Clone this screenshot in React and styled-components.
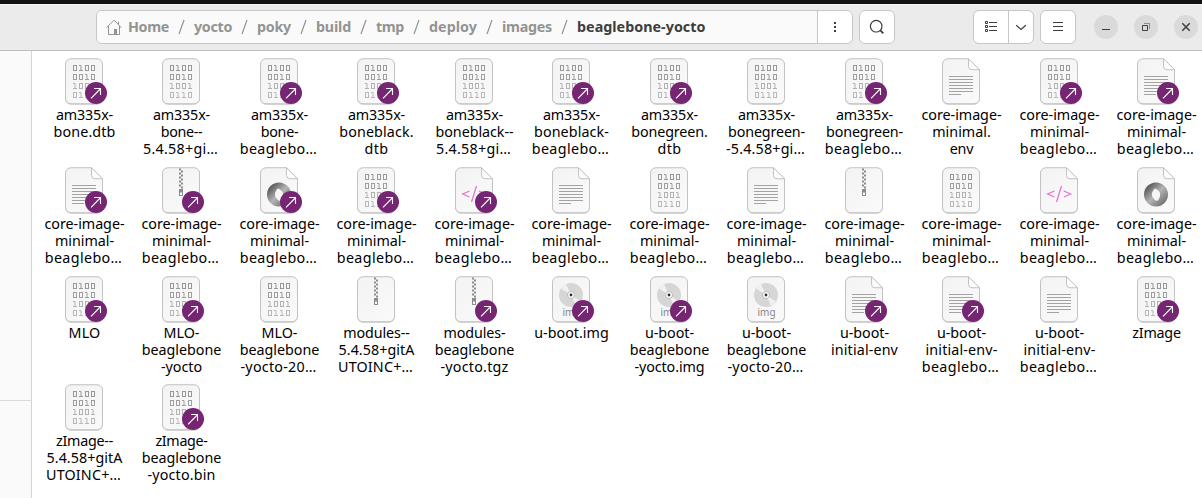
import React, { useLayoutEffect, useRef, useState } from "react";
import styled, { createGlobalStyle } from "styled-components";

const Global = createGlobalStyle`
  *, *::before, *::after { box-sizing: border-box; }
  body { margin: 0; background: #fff; overflow: hidden; font-family: "Noto Sans", "Open Sans", sans-serif; }
`;

const Window = styled.div`
  display: flex;
  flex-direction: column;
  width: 1202px;
  height: 498px;
  overflow: hidden;
  background: #fff;
`;
const TopPanel = styled.div`
  flex: 0 0 4px;
  background: #121212;
`;
const HeaderBar = styled.header`
  flex: 0 0 47px;
  display: flex;
  align-items: flex-start;
  padding: 5px 0 0 96px;
  background: #ebebeb;
  border-top: 1px solid #f8f8f8;
  border-bottom: 1px solid #bfbfbf;
`;
const Group = styled.div`
  display: flex;
  flex: none;
  height: 34px;
  width: ${(p) => p.$w}px;
  margin-right: ${(p) => p.$gap || 0}px;
  border: 1px solid #c6c6c6;
  border-radius: 6px;
  background: #fff;
  overflow: hidden;
`;
const Segment = styled.button`
  display: flex;
  align-items: center;
  justify-content: center;
  flex: ${(p) => (p.$w ? `0 0 ${p.$w}px` : 1)};
  padding: 0;
  border: 0;
  border-left: ${(p) => (p.$divided ? "1px solid #c6c6c6" : "0")};
  background: transparent;
`;
const PathBar = styled.nav`
  flex: 1;
  display: flex;
  align-items: center;
  padding-left: 9px;
  background: #fafafa;
`;
const Crumb = styled.span`
  flex: 0 0 ${(p) => p.$w}px;
  font-size: 14.3px;
  line-height: 20px;
  font-weight: 700;
  white-space: nowrap;
  color: ${(p) => (p.$current ? "#3d3d3d" : "#929492")};
`;
const Slash = styled.span`
  flex: 0 0 25px;
  display: flex;
  justify-content: center;
`;
const HomeIcon = styled.svg`
  flex: none;
  margin-right: 6px;
`;
const WindowButton = styled.button`
  display: flex;
  flex: none;
  align-items: center;
  justify-content: center;
  width: 24px;
  height: 24px;
  margin: 5px 16px 0 0;
  padding: 0;
  border: 0;
  border-radius: 50%;
  background: #dadada;
`;
const Body = styled.div`
  flex: 1;
  display: flex;
  min-height: 0;
`;
const Sidebar = styled.aside`
  flex: 0 0 32px;
  border-right: 1px solid #d5d5d5;
  background: #fafafa;
`;
const Places = styled.div`
  height: 350px;
  border-bottom: 1px solid #dadada;
`;
const Files = styled.main`
  flex: none;
  display: grid;
  grid-template-columns: repeat(6, 97px 98px);
  grid-template-rows: 109px 109px 108px 108px;
  padding: 6px 0 0 4px;
`;
const File = styled.div`
  display: flex;
  flex-direction: column;
  align-items: center;
  width: 97px;
`;
const Thumb = styled.svg`
  display: block;
  flex: none;
  margin-left: 6px;
`;
const Label = styled.div`
  display: flex;
  flex-direction: column;
  align-items: center;
`;
const LabelLine = styled.span`
  display: block;
  padding-right: ${(p) => (p.$cut ? 2 : 0)}px;
  font-size: 14.3px;
  line-height: 17px;
  height: 17px;
  white-space: pre;
  color: #000;
`;

function FitText({ as: Tag, width, children, ...rest }) {
  const ref = useRef(null);
  const [spacing, setSpacing] = useState(0);
  useLayoutEffect(() => {
    const range = document.createRange();
    range.selectNodeContents(ref.current);
    const natural = range.getBoundingClientRect().width;
    setSpacing((width - natural) / children.length);
  }, [width, children]);
  return (
    <Tag ref={ref} style={{ letterSpacing: `${spacing}px` }} {...rest}>
      {children}
    </Tag>
  );
}

const LINE_WIDTHS = {
  "am335x-": 57, "bone.dtb": 62, "bone--": 41.5, "5.4.58+gi…": 75, "bone-": 37.5,
  "core-image-": 80, "minimal-": 59, "beaglebo…": 77.5, "beaglebone": 79.5,
  "-yocto.tgz": 68, "modules-": 62, "u-boot.img": 74.5, "bonegreen-": 77,
  "-5.4.58+gi…": 79, "bonegreen.": 76.5, "dtb": 24, "minimal.": 58.5, "env": 23.5,
  "MLO": 32, "MLO-": 36, "-yocto-20…": 76, "modules--": 66.5, "5.4.58+gitA": 76,
  "UTOINC+…": 75, "zImage--": 57, "zImage-": 52, "zImage": 48.5, "-yocto.bin": 68,
  "boneblack.": 74.5, "boneblack--": 78, "boneblack-": 75, "u-boot-": 49,
  "initial-env": 67, "initial-env-": 72, "-yocto": 41, "-yocto.img": 70,
};

const DIGITS = ["0100", "0010", "1001", "0110"];
const PAGE_PLAIN = "M6 .75h26a5.5 5.5 0 0 1 5.5 5.5v34a5.5 5.5 0 0 1-5.5 5.5h-26a5.5 5.5 0 0 1-5.5-5.5v-34a5.5 5.5 0 0 1 5.5-5.5z";
const PAGE_FOLDED = "M6 .75h20.5l11 11v28.5a5.5 5.5 0 0 1-5.5 5.5h-26a5.5 5.5 0 0 1-5.5-5.5v-34a5.5 5.5 0 0 1 5.5-5.5z";

function Binary() {
  return DIGITS.map((row, r) => (
    <g key={r} stroke={["#989898", "#9e9e9e", "#b2b2b2", "#b8b8b8"][r]} fill="none">
      {[...row].map((d, c) => {
        const x = 8.5 + c * 6, y = 7.5 + r * 9;
        return d === "0"
          ? <rect key={c} x={x} y={y} width="3" height="5" />
          : <path key={c} d={`M${x - 0.5} ${y}h2v5M${x - 0.5} ${y + 5}h4`} />;
      })}
    </g>
  ));
}
function TextLines() {
  return (
    <g fill="#a3a3a3">
      {[18, 21, 24, 27, 30, 33, 36].map((y, i) => (
        <rect key={y} x="7" y={y} width={i === 6 ? 12 : 24} height="1" />
      ))}
    </g>
  );
}
function Zip() {
  return (
    <g fill="#8c8c8c">
      {[...Array(10)].map((_, i) => (
        <rect key={i} x={i % 2 ? 19 : 17} y={1.5 + i * 2} width="2" height="2" />
      ))}
      <path d="M17 22h4v7h-4zM18 25.5v2.5h2v-2.5z" fillRule="evenodd" />
    </g>
  );
}
function Code() {
  return <path d="M14.5 24L7.7 27l6.8 3M23.8 24l6.8 3-6.8 3M21.5 19l-5 16" fill="none" stroke="#e077d6" strokeWidth="1.3" />;
}
function Ring() {
  return (
    <g>
      <circle cx="19" cy="27.5" r="8" fill="none" stroke="url(#ring)" strokeWidth="8" />
      <path d="M18 21.500c5 1 7 9 2 12.500-5-1-6.500-9.500-2-12.500z" fill="#f6f6f6" />
    </g>
  );
}
function Disc() {
  return (
    <g>
      <circle cx="19" cy="19" r="12" fill="#d6d6d6" />
      <path d="M19 19L9 12.400A12 12 0 0 1 14 8.100zM19 19l10 6.600a12 12 0 0 1-5 4.300z" fill="#f0f0f0" />
      <circle cx="19" cy="19" r="3.5" fill="#fff" stroke="#bcbab0" />
      <circle cx="19" cy="19" r="1.4" fill="#2e2e2e" />
      <text x="19.500" y="40" textAnchor="middle" fontSize="10" fill="#858585">img</text>
    </g>
  );
}
const GLYPHS = { bin: Binary, txt: TextLines, zip: Zip, code: Code, json: Ring, img: Disc };

function FileIcon({ kind, link }) {
  const Glyph = GLYPHS[kind];
  const folded = kind === "txt" || kind === "code" || kind === "json";
  return (
    <Thumb width="45" height="49" viewBox="0 -1 45 49">
      <path d={folded ? PAGE_FOLDED : PAGE_PLAIN} transform="translate(0 .6)" fill="#d0d0d0" stroke="#d5d5d5" />
      <path d={folded ? PAGE_FOLDED : PAGE_PLAIN} fill="url(#paper)" stroke="#c2c2c2" />
      {folded && <path d="M26.500 .75v7.500a3.500 3.500 0 0 0 3.500 3.500h7.500z" fill="#fdfdfd" stroke="#c2c2c2" />}
      <Glyph />
      {link && (
        <g>
          <circle cx="31" cy="35" r="11" fill="#762572" />
          <path d="M26 40.300l9.700-9.800M29 30.500h6.500v6.500" fill="none" stroke="#fff" strokeWidth="1.100" />
        </g>
      )}
    </Thumb>
  );
}

const CIM = ["core-image-", "minimal-", "beaglebo…"];
const FILES = [
  ["bin", 1, ["am335x-", "bone.dtb"]],
  ["bin", 0, ["am335x-", "bone--", "5.4.58+gi…"]],
  ["bin", 1, ["am335x-", "bone-", "beaglebo…"]],
  ["bin", 1, ["am335x-", "boneblack.", "dtb"]],
  ["bin", 0, ["am335x-", "boneblack--", "5.4.58+gi…"]],
  ["bin", 1, ["am335x-", "boneblack-", "beaglebo…"]],
  ["bin", 1, ["am335x-", "bonegreen.", "dtb"]],
  ["bin", 0, ["am335x-", "bonegreen-", "-5.4.58+gi…"]],
  ["bin", 1, ["am335x-", "bonegreen-", "beaglebo…"]],
  ["txt", 0, ["core-image-", "minimal.", "env"]],
  ["bin", 1, CIM],
  ["txt", 1, CIM],
  ["txt", 1, CIM],
  ["zip", 1, CIM],
  ["json", 1, CIM],
  ["bin", 1, CIM],
  ["code", 1, CIM],
  ["txt", 0, CIM],
  ["bin", 0, CIM],
  ["txt", 0, CIM],
  ["zip", 0, CIM],
  ["bin", 0, CIM],
  ["code", 0, CIM],
  ["json", 0, CIM],
  ["bin", 1, ["MLO"]],
  ["bin", 1, ["MLO-", "beaglebone", "-yocto"]],
  ["bin", 0, ["MLO-", "beaglebone", "-yocto-20…"]],
  ["zip", 0, ["modules--", "5.4.58+gitA", "UTOINC+…"]],
  ["zip", 1, ["modules-", "beaglebone", "-yocto.tgz"]],
  ["img", 1, ["u-boot.img"]],
  ["img", 1, ["u-boot-", "beaglebone", "-yocto.img"]],
  ["img", 0, ["u-boot-", "beaglebone", "-yocto-20…"]],
  ["txt", 1, ["u-boot-", "initial-env"]],
  ["txt", 1, ["u-boot-", "initial-env-", "beaglebo…"]],
  ["txt", 0, ["u-boot-", "initial-env-", "beaglebo…"]],
  ["bin", 1, ["zImage"]],
  ["bin", 0, ["zImage--", "5.4.58+gitA", "UTOINC+…"]],
  ["bin", 1, ["zImage-", "beaglebone", "-yocto.bin"]],
];

const CRUMBS = [["Home", 41], ["yocto", 38], ["poky", 34], ["build", 35], ["tmp", 28], ["deploy", 48], ["images", 50], ["beaglebone-yocto", 128.5]];

export default function App() {
  return (
    <Window>
      <Global />
      <TopPanel />
      <HeaderBar>
        <Group $w={757} $gap={6}>
          <PathBar>
            <HomeIcon width="16" height="16" viewBox="0 0 16 16" fill="none" stroke="#929492">
              <defs>
                <linearGradient id="paper" x1="0" y1="0" x2="1" y2="1">
                  <stop offset="0" stopColor="#f3f3f3" />
                  <stop offset="1" stopColor="#fafafa" />
                </linearGradient>
                <linearGradient id="ring" x1="0" y1="0" x2="1" y2="1">
                  <stop offset="0" stopColor="#5c5c5c" />
                  <stop offset=".5" stopColor="#b4b4b4" />
                  <stop offset="1" stopColor="#777" />
                </linearGradient>
              </defs>
              <path d="M.6 8.600L8 1.200l7.400 7.400M2.500 7v8.500h11V7M12.500 2.500v3" />
              <path d="M8 10h3v5.500H8z" fill="#929492" stroke="none" />
            </HomeIcon>
            {CRUMBS.map(([name, w], i) => (
              <React.Fragment key={name}>
                {i > 0 && (
                  <Slash>
                    <svg width="7" height="16" viewBox="0 0 7 16"><path d="M6 1L1 15" stroke="#929492" strokeWidth="1.2" /></svg>
                  </Slash>
                )}
                <FitText as={Crumb} width={w} $w={w} $current={i === CRUMBS.length - 1}>{name}</FitText>
              </React.Fragment>
            ))}
          </PathBar>
          <Segment $w={35} $divided>
            <svg width="16" height="16" viewBox="0 0 16 16" fill="#3d3d3d">
              <rect x="7" y="3" width="2" height="2" /><rect x="7" y="7" width="2" height="2" /><rect x="7" y="11" width="2" height="2" />
            </svg>
          </Segment>
        </Group>
        <Group $w={36} $gap={78}>
          <Segment>
            <svg width="16" height="16" viewBox="0 0 16 16" fill="none" stroke="#3d3d3d">
              <circle cx="7.2" cy="7.2" r="5.8" strokeWidth="1.2" /><path d="M11.300 11.300l3 3" strokeWidth="1.8" />
            </svg>
          </Segment>
        </Group>
        <Group $w={61} $gap={6}>
          <Segment>
            <svg width="16" height="16" viewBox="0 0 16 16" fill="none" stroke="#3d3d3d">
              <path d="M2.500 2.500h2v2h-2zM2.500 6.500h2v2h-2zM2.500 10.500h2v2h-2zM6 3.500h8M6 7.500h8M6 11.500h8" />
            </svg>
          </Segment>
          <Segment $w={25} $divided>
            <svg width="12" height="12" viewBox="0 0 12 12" fill="none" stroke="#3d3d3d"><path d="M1.200 4.200L6 8.500l4.800-4.300" strokeWidth="1.2" /></svg>
          </Segment>
        </Group>
        <Group $w={36} $gap={18}>
          <Segment>
            <svg width="16" height="16" viewBox="0 0 16 16" stroke="#3d3d3d"><path d="M3 3.500h10M3 7.500h10M3 11.500h10" /></svg>
          </Segment>
        </Group>
        <WindowButton>
          <svg width="16" height="16" viewBox="0 0 16 16" stroke="#3d3d3d"><path d="M4 10.500h8" /></svg>
        </WindowButton>
        <WindowButton>
          <svg width="16" height="16" viewBox="0 0 16 16" fill="none" stroke="#3d3d3d">
            <path d="M4.500 6.500h5v5h-5z" /><path d="M6 4.500h5.500v5.500" opacity=".5" />
          </svg>
        </WindowButton>
        <WindowButton>
          <svg width="16" height="16" viewBox="0 0 16 16" stroke="#3d3d3d" strokeWidth="1.5"><path d="M4.300 4.300l7.400 7.400M11.700 4.300l-7.400 7.400" /></svg>
        </WindowButton>
      </HeaderBar>
      <Body>
        <Sidebar><Places /></Sidebar>
        <Files>
          {FILES.map(([kind, link, lines], i) => (
            <File key={i}>
              <FileIcon kind={kind} link={link === 1} />
              <Label>
                {lines.map((line) => (
                  <FitText as={LabelLine} key={line} width={LINE_WIDTHS[line]} $cut={line.endsWith("…")}>{line}</FitText>
                ))}
              </Label>
            </File>
          ))}
        </Files>
      </Body>
    </Window>
  );
}
